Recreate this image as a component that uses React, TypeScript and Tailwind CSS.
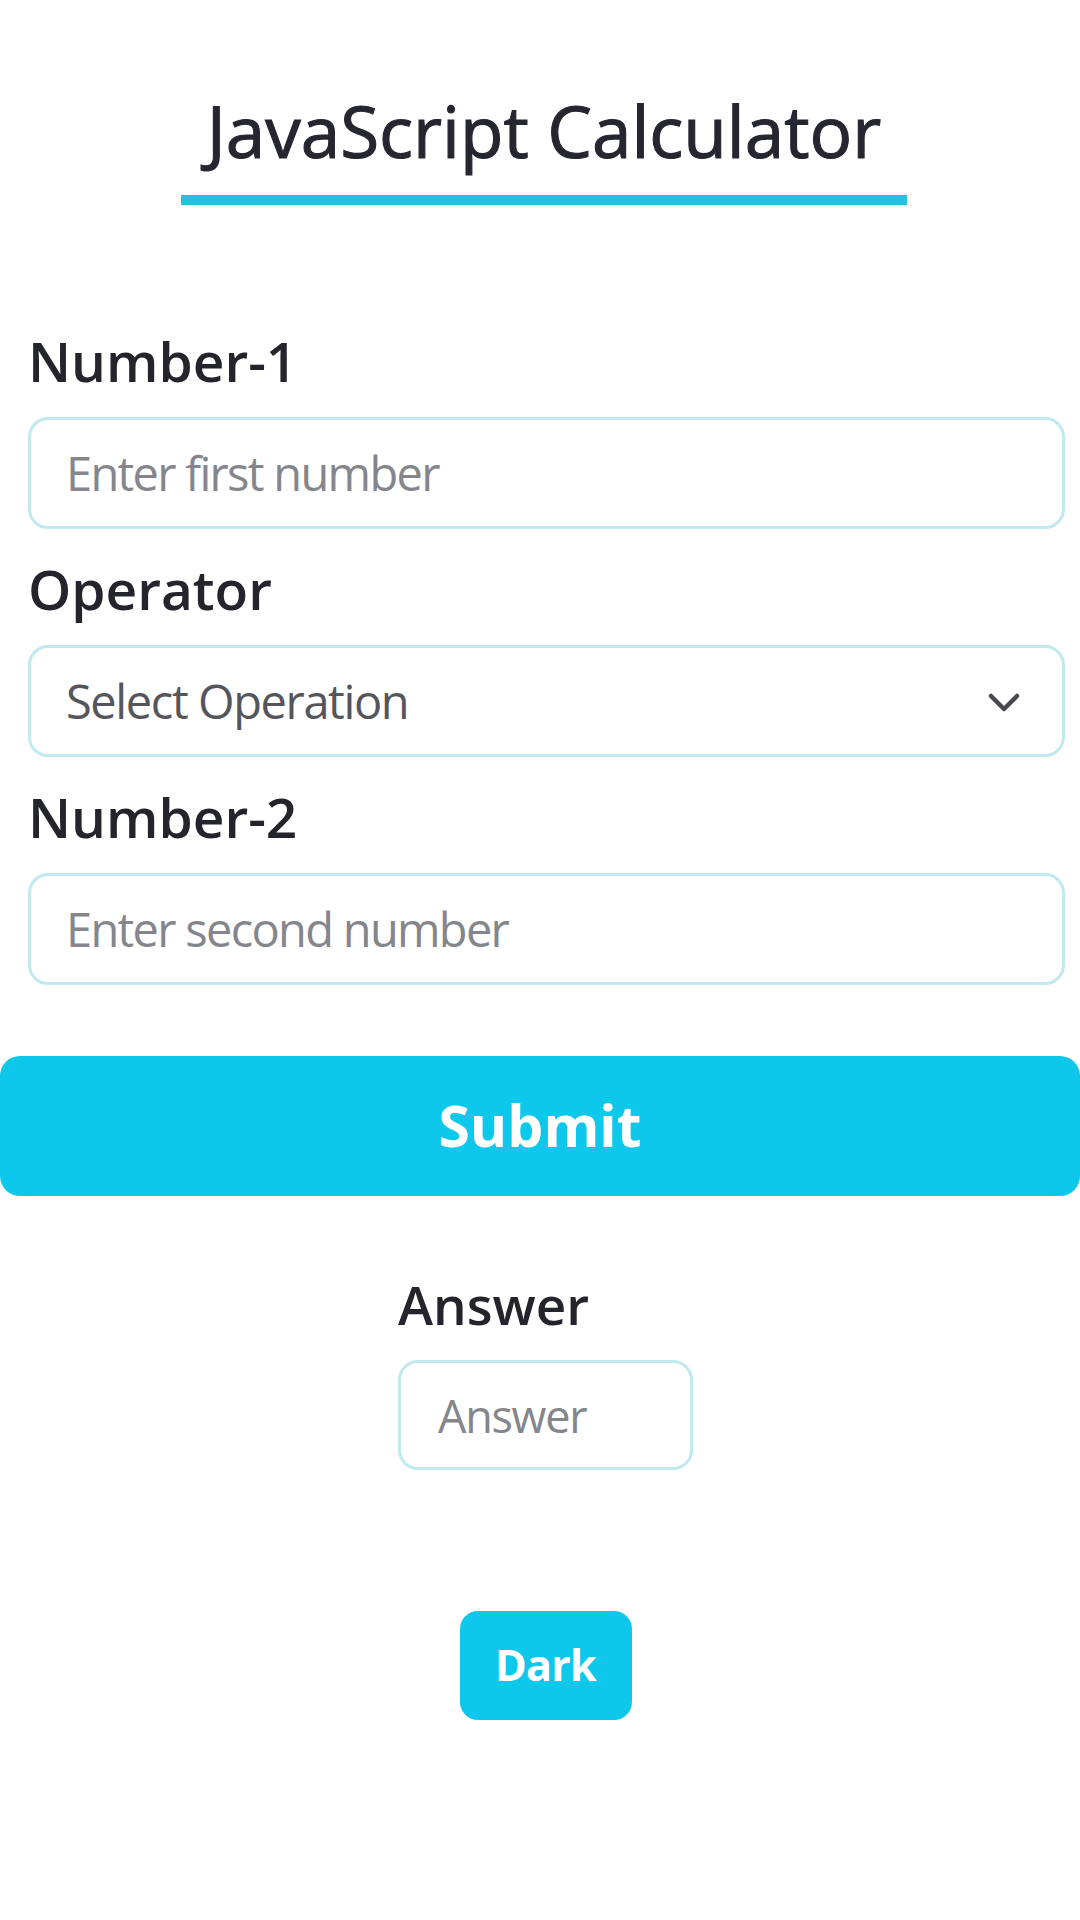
import React from "react";

const font = { fontFamily: '"Open Sans", "Noto Sans", sans-serif' };

function Label({ children }: { children: React.ReactNode }) {
  return (
    <div className="text-[55px] leading-none font-semibold text-[#24242c] mb-[29px]">
      {children}
    </div>
  );
}

function Field({ placeholder }: { placeholder: string }) {
  return (
    <input
      type="number"
      placeholder={placeholder}
      className="block w-full h-[112px] rounded-[20px] border-[3px] border-[#c0e9f0] bg-white pl-[35px] text-[47px] tracking-[-1.7px] text-[#333] placeholder:text-[#85858c] outline-none mb-[32px]"
    />
  );
}

export default function App() {
  return (
    <div className="min-h-[1920px] w-[1080px] bg-white overflow-hidden" style={font}>
      <div className="pt-[95px] flex flex-col items-center pl-[8px]">
        <h1 className="text-[71px] leading-none font-normal text-[#262630] [-webkit-text-stroke:1.1px_#262630]">
          JavaScript Calculator
        </h1>
        <div className="mt-[29px] w-[726px] h-[10px] bg-[#26bfdd]" />
      </div>

      <div className="pl-[28px] pr-[15px] mt-[128px]">
        <Label>Number-1</Label>
        <Field placeholder="Enter first number" />

        <Label>Operator</Label>
        <div className="relative mb-[32px]">
          <select
            defaultValue=""
            className="block w-full h-[112px] appearance-none rounded-[20px] border-[3px] border-[#c0e9f0] bg-white pl-[35px] text-[47px] tracking-[-1.4px] text-[#55555c] outline-none"
          >
            <option value="" disabled>
              Select Operation
            </option>
            <option value="+">+</option>
            <option value="-">-</option>
            <option value="*">*</option>
            <option value="/">/</option>
          </select>
          <svg
            className="absolute right-[45px] top-[48px] pointer-events-none"
            width="32"
            height="20"
            viewBox="0 0 32 20"
            fill="none"
          >
            <path d="M3 3 L16 16 L29 3" stroke="#48484f" strokeWidth="4.5" strokeLinecap="round" strokeLinejoin="round" />
          </svg>
        </div>

        <Label>Number-2</Label>
        <Field placeholder="Enter second number" />
      </div>

      <div className="mt-[71px]">
        <button className="block w-full h-[140px] rounded-[20px] bg-[#0ec8ec] text-white text-[57px] font-bold">
          Submit
        </button>
      </div>

      <div className="mt-[82px] flex justify-center pl-[11px]">
        <div className="w-[295px]">
          <div className="text-[53px] leading-none font-semibold text-[#24242c] mb-[29px]">Answer</div>
          <input
            readOnly
            placeholder="Answer"
            className="block w-full h-[110px] rounded-[20px] border-[3px] border-[#c0e9f0] bg-white pl-[37px] text-[45px] tracking-[-1.3px] text-[#333] placeholder:text-[#85858c] outline-none"
          />
        </div>
      </div>

      <div className="mt-[141px] flex justify-center pl-[11px]">
        <button className="w-[172px] h-[109px] rounded-[18px] bg-[#0ec8ec] text-white text-[43px] tracking-[-0.8px] font-bold">
          Dark
        </button>
      </div>
    </div>
  );
}
